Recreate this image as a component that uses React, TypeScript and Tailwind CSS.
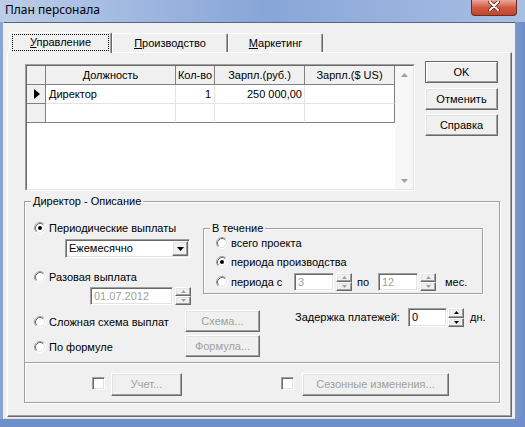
import React from "react";

// classic 3D edges
const raised =
  "border border-t-white border-l-white border-r-[#696969] border-b-[#696969] shadow-[inset_-1px_-1px_0_#a0a0a0,inset_1px_1px_0_#e3e3e3]";
const sunken =
  "border border-t-[#a0a0a0] border-l-[#a0a0a0] border-r-white border-b-white shadow-[inset_1px_1px_0_#696969,inset_-1px_-1px_0_#e3e3e3]";
const etched = "border border-[#a0a0a0] shadow-[inset_1px_1px_0_#fff,1px_1px_0_#fff]";

const Arrow = ({
  dir,
  color,
  w = 5,
  h = 3,
}: {
  dir: "up" | "down";
  color: string;
  w?: number;
  h?: number;
}) => (
  <svg width={w} height={h} viewBox={`0 0 ${w} ${h}`} className="block">
    <polygon
      points={dir === "up" ? `${w / 2},0 ${w},${h} 0,${h}` : `0,0 ${w},0 ${w / 2},${h}`}
      fill={color}
    />
  </svg>
);

const Radio = ({ checked = false }: { checked?: boolean }) => (
  <svg width="12" height="12" viewBox="0 0 12 12" className="shrink-0 block">
    <circle cx="6" cy="6" r="5" fill="#fff" />
    <path d="M2.11 9.89A5.5 5.5 0 0 1 9.89 2.11" fill="none" stroke="#a0a0a0" />
    <path d="M9.89 2.11A5.5 5.5 0 0 1 2.11 9.89" fill="none" stroke="#fff" />
    <path d="M2.82 9.18A4.5 4.5 0 0 1 9.18 2.82" fill="none" stroke="#696969" />
    <path d="M9.18 2.82A4.5 4.5 0 0 1 2.82 9.18" fill="none" stroke="#e3e3e3" />
    {checked && <circle cx="6" cy="6" r="2" fill="#000" />}
  </svg>
);

const RadioRow = ({
  label,
  checked,
  className = "",
}: {
  label: string;
  checked?: boolean;
  className?: string;
}) => (
  <div className={`flex items-center gap-[3px] h-[14px] ${className}`}>
    <Radio checked={checked} />
    <span className="whitespace-nowrap">{label}</span>
  </div>
);

const Spinner = ({ enabled = false, className = "" }: { enabled?: boolean; className?: string }) => {
  const color = enabled ? "#000" : "#a0a0a0";
  return (
    <div className={`flex flex-col w-[16px] shrink-0 ${className}`}>
      <div className={`flex-1 flex items-center justify-center bg-[#f0f0f0] ${raised}`}>
        <Arrow dir="up" color={color} />
      </div>
      <div className={`flex-1 flex items-center justify-center bg-[#f0f0f0] ${raised}`}>
        <Arrow dir="down" color={color} />
      </div>
    </div>
  );
};

const Field = ({
  value,
  disabled,
  className = "",
}: {
  value: string;
  disabled?: boolean;
  className?: string;
}) => (
  <div
    className={`${sunken} bg-white flex items-center pl-[3px] shrink-0 ${
      disabled ? "text-[#a0a0a0]" : "text-black"
    } ${className}`}
  >
    {value}
  </div>
);

const Btn = ({
  children,
  disabled,
  className = "",
}: {
  children: React.ReactNode;
  disabled?: boolean;
  className?: string;
}) => (
  <button
    type="button"
    className={`${raised} bg-[#f0f0f0] flex items-center justify-center shrink-0 ${
      disabled ? "text-[#a0a0a0]" : "text-black"
    } ${className}`}
  >
    {children}
  </button>
);

const Check = ({ className = "" }: { className?: string }) => (
  <div className={`w-[13px] h-[13px] bg-white shrink-0 ${sunken} ${className}`} />
);

const TitleBar = () => (
  <div className="h-[22px] shrink-0 flex items-start justify-between bg-gradient-to-r from-[#bccde9] via-[#87a5d7] to-[#a9bfe3]">
    <span className="font-['Noto_Sans',sans-serif] text-[12px] leading-[20px] pl-[5px] text-black">
      План персонала
    </span>
    <div className="mr-[8px] w-[46px] h-[16px] rounded-b-[4px] border border-t-0 border-[#6b2a20] bg-gradient-to-b from-[#e9a899] via-[#d05a41] to-[#c2452c] flex items-start justify-center">
      <svg width="12" height="10" viewBox="0 0 12 10" className="block mt-[1px]">
        <path d="M2 1L10 9M10 1L2 9" stroke="#5a2018" strokeWidth="3.6" strokeLinecap="round" />
        <path d="M2 1L10 9M10 1L2 9" stroke="#fff" strokeWidth="2" strokeLinecap="round" />
      </svg>
    </div>
  </div>
);

const Tabs = () => (
  <div className="flex items-end h-[20px] ml-[2px] shrink-0">
    <div className="relative z-10 w-[103px] h-[21px] mb-[-1px] bg-[#f0f0f0] border-t border-l border-t-white border-l-white border-r border-r-[#696969] shadow-[inset_-1px_0_0_#a0a0a0] rounded-t-[2px] px-[2px] pt-[1px] pb-[2px]">
      <div className="h-full border border-dotted border-black flex items-center justify-center">
        <span>
          <span className="underline">У</span>правление
        </span>
      </div>
    </div>
    <div className="w-[116px] h-[19px] bg-[#f0f0f0] border-t border-l border-t-white border-l-white border-r border-r-[#696969] shadow-[inset_-1px_0_0_#a0a0a0] rounded-t-[2px] flex items-center justify-center">
      <span>
        <span className="underline">П</span>роизводство
      </span>
    </div>
    <div className="w-[95px] h-[19px] bg-[#f0f0f0] border-t border-l border-t-white border-l-white border-r border-r-[#696969] shadow-[inset_-1px_0_0_#a0a0a0] rounded-t-[2px] flex items-center justify-center">
      <span>
        <span className="underline">М</span>аркетинг
      </span>
    </div>
  </div>
);

const colW = ["w-[19px]", "w-[130px]", "w-[39px]", "w-[90px]", "w-[90px]"];

const Grid = () => (
  <div className="mt-[3px] w-[390px] h-[127px] border border-t-[#a0a0a0] border-l-[#a0a0a0] border-r-white border-b-white shrink-0">
    <div className="w-full h-full flex border border-t-[#696969] border-l-[#696969] border-r-[#e3e3e3] border-b-[#e3e3e3] bg-white">
      <div className="w-[368px] flex flex-col">
        <div className="flex h-[19px]">
          {["", "Должность", "Кол-во", "Зарпл.(руб.)", "Зарпл.($ US)"].map((t, i) => (
            <div
              key={i}
              className={`${colW[i]} bg-[#f0f0f0] border-r border-b border-[#808080] flex items-center justify-center whitespace-nowrap`}
            >
              {t}
            </div>
          ))}
        </div>
        <div className="flex h-[19px]">
          <div className={`${colW[0]} bg-[#f0f0f0] border-r border-b border-[#808080] flex items-center pl-[7px]`}>
            <svg width="6" height="10" viewBox="0 0 6 10" className="block">
              <polygon points="0,0 6,5 0,10" fill="#000" />
            </svg>
          </div>
          <div className={`${colW[1]} border-r border-b border-[#e3e3e3] flex items-center pl-[3px]`}>Директор</div>
          <div className={`${colW[2]} border-r border-b border-[#e3e3e3] flex items-center justify-end pr-[3px]`}>1</div>
          <div className={`${colW[3]} border-r border-b border-[#e3e3e3] flex items-center justify-end pr-[2px]`}>
            250 000,00
          </div>
          <div className={`${colW[4]} border-r border-r-[#808080] border-b border-b-[#e3e3e3]`} />
        </div>
        <div className="flex h-[19px]">
          <div className={`${colW[0]} bg-[#f0f0f0] border-r border-b border-[#808080]`} />
          <div className={`${colW[1]} border-r border-r-[#e3e3e3] border-b border-b-[#808080]`} />
          <div className={`${colW[2]} border-r border-r-[#e3e3e3] border-b border-b-[#808080]`} />
          <div className={`${colW[3]} border-r border-r-[#e3e3e3] border-b border-b-[#808080]`} />
          <div className={`${colW[4]} border-r border-b border-[#808080]`} />
        </div>
      </div>
      <div className="flex-1 bg-[#f7f7f7] flex flex-col justify-between">
        <div className="h-[17px] flex items-center justify-center">
          <Arrow dir="up" color="#a0a0a0" w={7} h={4} />
        </div>
        <div className="h-[17px] flex items-center justify-center">
          <Arrow dir="down" color="#a0a0a0" w={7} h={4} />
        </div>
      </div>
    </div>
  </div>
);

const Description = () => (
  <fieldset className={`ml-[16px] mt-[3px] w-[476px] ${etched}`}>
    <legend className="ml-[6px] px-[2px] leading-[14px] bg-[#f0f0f0]">Директор - Описание</legend>

    <div className="flex items-start pl-[9px] mt-[13px]">
      <div className="w-[169px] flex flex-col">
        <RadioRow label="Периодические выплаты" checked />
        <div className={`ml-[31px] mt-[4px] w-[125px] h-[19px] bg-white flex items-center ${sunken}`}>
          <span className="flex-1 pl-[3px]">Ежемесячно</span>
          <div className={`w-[16px] h-[15px] mr-[1px] bg-[#f0f0f0] flex items-center justify-center ${raised}`}>
            <Arrow dir="down" color="#000" w={7} h={4} />
          </div>
        </div>
        <RadioRow label="Разовая выплата" className="mt-[12px]" />
        <div className="flex ml-[56px] mt-[3px]">
          <Field value="01.07.2012" disabled className="w-[83px] h-[18px]" />
          <Spinner className="ml-[2px] h-[18px]" />
        </div>
      </div>

      <fieldset className={`w-[280px] ${etched}`}>
        <legend className="ml-[6px] px-[2px] leading-[14px] bg-[#f0f0f0]">В течение</legend>
        <div className="pl-[12px] pb-[2px] flex flex-col">
          <RadioRow label="всего проекта" className="mt-[1px]" />
          <RadioRow label="периода производства" checked className="mt-[5px]" />
          <div className="flex items-center h-[18px] mt-[4px]">
            <Radio />
            <span className="ml-[3px] w-[63px]">периода с</span>
            <Field value="3" disabled className="w-[40px] h-[18px]" />
            <Spinner className="ml-[2px] h-[18px]" />
            <span className="ml-[5px] w-[21px]">по</span>
            <Field value="12" disabled className="w-[40px] h-[18px]" />
            <Spinner className="ml-[2px] h-[18px]" />
            <span className="ml-[9px]">мес.</span>
          </div>
        </div>
      </fieldset>
    </div>

    <div className="flex items-start pl-[9px] mt-[3px]">
      <div className="w-[151px] pt-[7px] flex flex-col">
        <RadioRow label="Сложная схема выплат" />
        <RadioRow label="По формуле" className="mt-[11px]" />
      </div>
      <div className="w-[75px] pt-[2px] flex flex-col">
        <Btn disabled className="w-[75px] h-[22px]">
          Схема...
        </Btn>
        <Btn disabled className="w-[75px] h-[22px] mt-[3px]">
          Формула...
        </Btn>
      </div>
      <div className="ml-[35px] flex items-center h-[19px]">
        <span className="w-[113px]">Задержка платежей:</span>
        <Field value="0" className="w-[39px] h-[19px]" />
        <Spinner enabled className="ml-[1px] h-[19px]" />
        <span className="ml-[6px]">дн.</span>
      </div>
    </div>

    <div className="mt-[5px] border-t border-t-[#a0a0a0] shadow-[inset_0_1px_0_#fff] flex items-start pt-[10px] pb-[6px] pl-[67px]">
      <Check className="mt-[4px]" />
      <Btn disabled className="ml-[6px] w-[71px] h-[23px]">
        Учет...
      </Btn>
      <Check className="mt-[4px] ml-[99px]" />
      <Btn disabled className="ml-[8px] w-[147px] h-[23px]">
        Сезонные изменения...
      </Btn>
    </div>
  </fieldset>
);

const Panel = () => (
  <div className="flex-1 flex flex-col bg-[#f0f0f0] border border-t-white border-l-white border-r-[#696969] border-b-[#696969] shadow-[inset_-1px_-1px_0_#a0a0a0]">
    <div className="flex items-start pl-[17px] pt-[8px]">
      <Grid />
      <div className="ml-[10px] flex flex-col">
        <Btn className="w-[73px] h-[22px] !border-[#696969] !shadow-[inset_1px_1px_0_#fff,inset_-1px_-1px_0_#a0a0a0]">
          OK
        </Btn>
        <Btn className="w-[73px] h-[22px] mt-[5px]">Отменить</Btn>
        <Btn className="w-[73px] h-[22px] mt-[4px]">Справка</Btn>
      </div>
    </div>
    <Description />
  </div>
);

export default function App() {
  return (
    <div className="w-[525px] h-[427px] flex flex-col bg-[#7d9bd0] font-['Liberation_Sans',Arial,sans-serif] text-[11px] leading-[13px] text-black overflow-hidden select-none">
      <TitleBar />
      <div className="flex flex-1 min-h-0">
        <div className="w-[3px] bg-[#8aa5d4]" />
        <div className="w-[512px] flex flex-col bg-[#f0f0f0] border-t border-t-[#55677f] border-l border-l-[#e8eef8] border-b border-b-[#d8dde6] pt-[9px] pl-[3px] pr-[3px] pb-[1px]">
          <Tabs />
          <Panel />
        </div>
        <div className="flex-1 bg-gradient-to-r from-[#7b9ad0] to-[#6d8dc6]" />
      </div>
      <div className="h-[8px] shrink-0 bg-[#6f8fc8]" />
    </div>
  );
}
